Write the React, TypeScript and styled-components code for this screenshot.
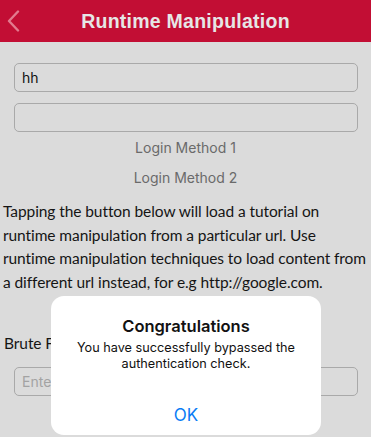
import React from 'react';
import styled, { createGlobalStyle } from 'styled-components';

const GlobalStyle = createGlobalStyle`
  html, body {
    margin: 0;
    padding: 0;
    background: #dbdbdb;
  }
`;

const Screen = styled.div`
  position: relative;
  width: 371px;
  height: 437px;
  overflow: hidden;
  background: #dbdbdb;
`;

const Header = styled.div`
  height: 42px;
  background: #c20e34;
  display: flex;
  align-items: center;
  justify-content: center;
  position: relative;
`;

const BackButton = styled.div`
  position: absolute;
  left: 6px;
  top: 10px;
  width: 16px;
  height: 22px;
  display: flex;
`;

const Title = styled.div`
  font-family: 'Liberation Sans', Arial, sans-serif;
  font-weight: bold;
  font-size: 19.5px;
  color: #e6e6e6;
  letter-spacing: 0.25px;
`;

const Content = styled.div`
  padding: 21px 0 0 0;
  display: flex;
  flex-direction: column;
`;

const Field = styled.div<{ $placeholder?: boolean }>`
  margin: 0 13px 0 14px;
  height: 29px;
  box-sizing: border-box;
  border: 1px solid #a9a9a9;
  border-radius: 5px;
  display: flex;
  align-items: center;
  padding-left: 7px;
  font-family: 'Inter', 'Noto Sans', sans-serif;
  font-size: 14px;
  color: ${({ $placeholder }) => ($placeholder ? '#a3a3a3' : '#111')};
  & + & {
    margin-top: 11px;
  }
`;

const LinkButton = styled.div`
  height: 30px;
  display: flex;
  align-items: center;
  justify-content: center;
  font-family: 'Inter', 'Noto Sans', sans-serif;
  font-size: 14px;
  color: #6a6a6a;
`;

const Paragraph = styled.p`
  margin: 8px 0 0 0;
  padding-left: 3px;
  font-family: 'Lato', 'Noto Sans', sans-serif;
  font-size: 15.5px;
  letter-spacing: -0.08px;
  line-height: 23.5px;
  color: #151515;
  white-space: nowrap;
`;

const Label = styled.div`
  margin-top: 38px;
  padding-left: 4px;
  height: 22px;
  line-height: 22px;
  font-family: 'Lato', 'Noto Sans', sans-serif;
  font-size: 15.5px;
  letter-spacing: -0.08px;
  color: #151515;
`;

const BottomField = styled(Field)`
  margin-top: 13px;
`;

const Alert = styled.div`
  position: absolute;
  left: 51px;
  top: 296px;
  width: 270px;
  height: 139px;
  background: #fff;
  border-radius: 13px;
  display: flex;
  flex-direction: column;
  align-items: center;
  font-family: 'Inter', 'Noto Sans', sans-serif;
`;

const AlertTitle = styled.div`
  margin-top: 19px;
  font-size: 16.5px;
  font-weight: 600;
  color: #111;
  line-height: 22px;
`;

const AlertMessage = styled.div`
  margin-top: 3px;
  font-size: 12.7px;
  line-height: 16px;
  color: #111;
  text-align: center;
`;

const AlertButton = styled.div`
  margin-top: auto;
  height: 40px;
  width: 100%;
  display: flex;
  align-items: center;
  justify-content: center;
  font-size: 17px;
  color: #0a7cf5;
`;

export default function App() {
  return (
    <>
      <GlobalStyle />
      <Screen>
        <Header>
          <BackButton>
            <svg width="16" height="22" viewBox="0 0 16 22">
              <path d="M12 1.5 L3 11 L12 20.5" fill="none" stroke="#e27a8e" strokeWidth="2.4" strokeLinecap="round" strokeLinejoin="round" />
            </svg>
          </BackButton>
          <Title>Runtime Manipulation</Title>
        </Header>
        <Content>
          <Field>hh</Field>
          <Field />
          <LinkButton>Login Method 1</LinkButton>
          <LinkButton>Login Method 2</LinkButton>
          <Paragraph>
            Tapping the button below will load a tutorial on
            <br />
            runtime manipulation from a particular url. Use
            <br />
            runtime manipulation techniques to load content from
            <br />a different url instead, for e.g http://google.com.
          </Paragraph>
          <Label>Brute Force</Label>
          <BottomField $placeholder>Enter 4 digit code</BottomField>
        </Content>
        <Alert>
          <AlertTitle>Congratulations</AlertTitle>
          <AlertMessage>
            You have successfully bypassed the
            <br />
            authentication check.
          </AlertMessage>
          <AlertButton>OK</AlertButton>
        </Alert>
      </Screen>
    </>
  );
}
